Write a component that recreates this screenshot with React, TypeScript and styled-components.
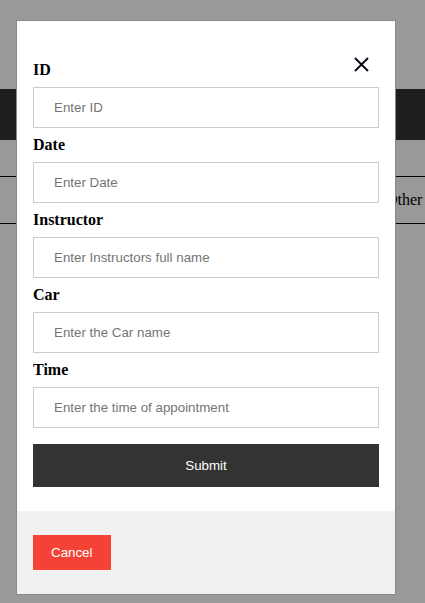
import styled, { createGlobalStyle } from 'styled-components';

const fields = [
  { label: 'ID', placeholder: 'Enter ID' },
  { label: 'Date', placeholder: 'Enter Date' },
  { label: 'Instructor', placeholder: 'Enter Instructors full name' },
  { label: 'Car', placeholder: 'Enter the Car name' },
  { label: 'Time', placeholder: 'Enter the time of appointment' },
];

const App = () => {
  return (
    <>
      <GlobalStyle />
      <Page>
        <NavBar />
        <TableRow>
          <Cell />
          <Cell>Other</Cell>
        </TableRow>
      </Page>
      <Overlay>
        <ModalContent>
          <CloseButton aria-label="Close">
            <svg width="15" height="15" viewBox="0 0 15 15">
              <path d="M1 1 L14 14 M14 1 L1 14" stroke="#0a0a14" strokeWidth="1.9" fill="none" />
            </svg>
          </CloseButton>
          <FormBody>
            {fields.map((f) => (
              <Field key={f.label}>
                <Label>{f.label}</Label>
                <Input type="text" placeholder={f.placeholder} />
              </Field>
            ))}
            <SubmitButton type="button">Submit</SubmitButton>
          </FormBody>
          <Footer>
            <CancelButton type="button">Cancel</CancelButton>
          </Footer>
        </ModalContent>
      </Overlay>
    </>
  );
};

const GlobalStyle = createGlobalStyle`
  html, body {
    margin: 0;
    padding: 0;
    background: #fff;
    font-family: "Liberation Serif", "Times New Roman", serif;
  }
`;

const Page = styled.div`
  padding-top: 89px;
  height: 603px;
  box-sizing: border-box;
  overflow: hidden;
`;

const NavBar = styled.div`
  height: 51px;
  background-color: #333;
`;

const TableRow = styled.div`
  display: grid;
  grid-template-columns: 386px 1fr;
  align-items: center;
  height: 46px;
  margin-top: 36px;
  border-top: 1px solid #000;
  border-bottom: 1px solid #000;
`;

const Cell = styled.div`
  font-size: 16px;
  color: #000;
  white-space: nowrap;
`;

const Overlay = styled.div`
  position: fixed;
  inset: 0;
  background-color: rgba(0, 0, 0, 0.4);
`;

const ModalContent = styled.div`
  position: relative;
  box-sizing: border-box;
  width: 380px;
  margin: 20px 0 0 16px;
  background-color: #fff;
  border: 1px solid #888;
`;

const CloseButton = styled.span`
  position: absolute;
  top: 36px;
  right: 26px;
  display: flex;
  width: 15px;
  height: 15px;
  cursor: pointer;
`;

const FormBody = styled.div`
  display: flex;
  flex-direction: column;
  padding: 40px 16px 16px;
`;

const Field = styled.div`
  display: flex;
  flex-direction: column;
`;

const Label = styled.label`
  height: 18px;
  line-height: 18px;
  font-family: "Liberation Serif", "Times New Roman", serif;
  font-size: 16px;
  font-weight: bold;
  color: #000;
`;

const Input = styled.input`
  box-sizing: border-box;
  width: 100%;
  height: 41px;
  margin: 8px 0;
  padding: 12px 20px;
  border: 1px solid #ccc;
  font-family: "Liberation Sans", Arial, sans-serif;
  font-size: 13.333px;
  color: #000;
  outline: none;

  &::placeholder {
    color: #757575;
  }
`;

const SubmitButton = styled.button`
  width: 100%;
  height: 43px;
  margin: 8px 0;
  padding: 0 20px;
  border: none;
  background-color: #333;
  color: #fff;
  font-family: "Liberation Sans", Arial, sans-serif;
  font-size: 13.333px;
  cursor: pointer;
`;

const Footer = styled.div`
  display: flex;
  padding: 16px;
  background-color: #f1f1f1;
`;

const CancelButton = styled.button`
  height: 35px;
  margin: 8px 0;
  padding: 0 18px;
  border: none;
  background-color: #f44336;
  color: #fff;
  font-family: "Liberation Sans", Arial, sans-serif;
  font-size: 13.333px;
  cursor: pointer;
`;

export default App;
